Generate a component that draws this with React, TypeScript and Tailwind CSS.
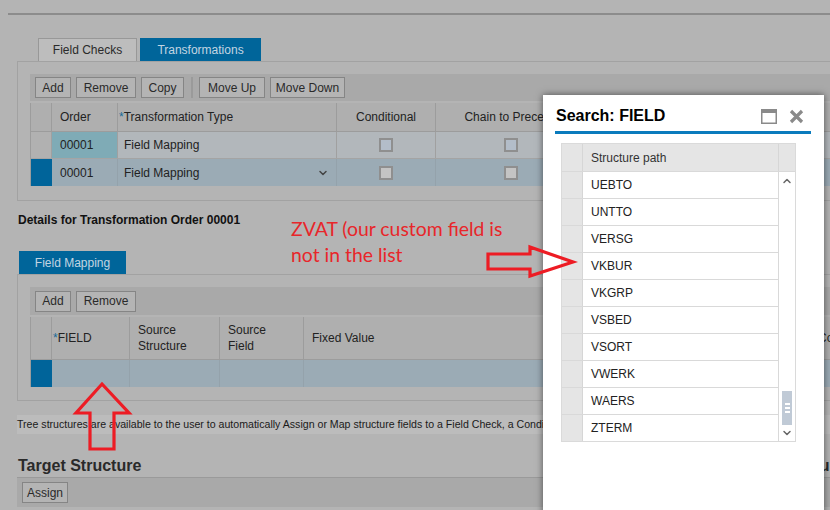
import {ChevronDown, ChevronUp} from "lucide-react";

const font = "font-['Liberation_Sans',Arial,sans-serif]";

function ToolButton({label, w}: {label: string, w: string}) {
    return (
        <button className={`${w} h-[21px] border border-[#858585] bg-[#b4b4b4] text-[12px] text-[#2a2a2a] leading-none`}>
            {label}
        </button>
    )
}

function Check({light}: {light?: boolean}) {
    return <div className={`w-[14px] h-[14px] border-2 border-[#8f8f8f] ${light ? "bg-[#c4c4c4]" : "bg-[#b3bdc9]"}`}/>
}

const fieldRows = ["UEBTO", "UNTTO", "VERSG", "VKBUR", "VKGRP", "VSBED", "VSORT", "VWERK", "WAERS", "ZTERM"]

function SearchDialog() {
    return (
        <div className="absolute left-[543px] top-[95px] w-[281px] h-[430px] bg-white shadow-[0_0_7px_rgba(0,0,0,0.55)] pl-[12px] pr-[13px]">
            <div className="flex items-end justify-between h-[39px] pb-[6px] pl-[1px] pr-[7px] border-b-[3px] border-[#0a7bbd]">
                <h2 className="font-bold text-[16px] leading-[18px] text-black">Search: FIELD</h2>
                <div className="flex items-center gap-[12px] pb-[1px]">
                    <svg width="16" height="15" viewBox="0 0 16 15">
                        <rect x="0.75" y="0.75" width="14.5" height="13.5" fill="none" stroke="#8a8a8a" strokeWidth="1.5"/>
                        <rect x="0" y="0" width="16" height="4" fill="#8a8a8a"/>
                    </svg>
                    <svg width="15" height="15" viewBox="0 0 15 15">
                        <path d="M2 2 L13 13 M13 2 L2 13" stroke="#8a8a8a" strokeWidth="3.2"/>
                    </svg>
                </div>
            </div>
            <div className="mt-[9px] ml-[6px] w-[235px] border border-[#dadada]">
                <div className="grid grid-cols-[21px_196px_1fr] h-[27px] bg-[#e5e5e5]">
                    <div className="border-r border-[#d6d6d6]"/>
                    <div className="flex items-center pl-[8px] text-[12px] text-[#333] border-r border-[#d6d6d6]">Structure path</div>
                    <div/>
                </div>
                <div className="grid grid-cols-[217px_1fr]">
                    <div>
                        {fieldRows.map(r => (
                            <div key={r} className="grid grid-cols-[21px_1fr] h-[27px] border-t border-[#d9d9d9]">
                                <div className="bg-[#e5e5e5] border-r border-[#d6d6d6]"/>
                                <div className="flex items-center pl-[8px] text-[12px] text-[#222] border-r border-[#d9d9d9]">{r}</div>
                            </div>
                        ))}
                    </div>
                    <div className="flex flex-col items-center border-t border-[#d9d9d9] pt-[3px] pb-[2px]">
                        <ChevronUp size={12} strokeWidth={3} className="text-[#666]"/>
                        <div className="flex-1"/>
                        <div className="w-[10px] h-[34px] bg-[#c0cad6] flex flex-col items-center justify-center gap-[2px]">
                            <div className="w-[5px] h-[2px] bg-white"/>
                            <div className="w-[5px] h-[2px] bg-white"/>
                            <div className="w-[5px] h-[2px] bg-white"/>
                        </div>
                        <ChevronDown size={12} strokeWidth={3} className="text-[#666] mt-[2px]"/>
                    </div>
                </div>
            </div>
        </div>
    )
}

function Annotations() {
    return (
        <>
            <p className="absolute left-[291px] top-[216px] font-['Lato',sans-serif] text-[19.4px] leading-[26px] text-[#e8262a]">
                ZVAT (our custom field is<br/>not in the list
            </p>
            <svg className="absolute left-[484px] top-[243px]" width="94" height="36" viewBox="0 0 94 36">
                <path d="M4 11 L46 11 L46 4 L89 19 L46 33 L46 26 L4 26 Z" fill="none" stroke="#ed1c24" strokeWidth="3.2"/>
            </svg>
            <svg className="absolute left-[72px] top-[379px]" width="62" height="74" viewBox="0 0 62 74">
                <path d="M30 5 L57 34 L42 34 L42 70 L18 70 L18 34 L4 34 Z" fill="none" stroke="#ed1c24" strokeWidth="3.2"/>
            </svg>
        </>
    )
}

export default function App() {
    return (
        <div className={`relative w-[830px] h-[510px] overflow-hidden bg-[#b4b4b4] text-[#222] ${font}`}>
            <div className="pt-[13px] pl-[8px]">
                <div className="h-[2px] bg-[#8c8c8c]"/>
            </div>

            <div className="flex ml-[38px] mt-[23px] gap-[3px] text-[12px]">
                <div className="w-[99px] h-[23px] flex items-center justify-center border border-b-0 border-[#989898] bg-[#bdbdbd] text-[#2a2a2a]">
                    Field Checks
                </div>
                <div className="w-[121px] h-[23px] flex items-center justify-center bg-[#00659a] text-[#c3d5e2]">
                    Transformations
                </div>
            </div>

            <div className="ml-[17px] border-l border-t border-b border-[#a2a2a2] pl-[12px] pt-[12px] pb-[14px]">
                <div className="bg-[#a9a9a9] h-[27px] flex items-center gap-[5px] pl-[5px]">
                    <ToolButton label="Add" w="w-[36px]"/>
                    <ToolButton label="Remove" w="w-[60px]"/>
                    <ToolButton label="Copy" w="w-[43px]"/>
                    <div className="w-[2px] h-[21px] bg-[#9a9a9a] ml-[2px] mr-[1px]"/>
                    <ToolButton label="Move Up" w="w-[66px]"/>
                    <ToolButton label="Move Down" w="w-[75px]"/>
                </div>
                <div className="mt-[2px] border-l border-[#9c9c9c] text-[12px]">
                    <div className="grid grid-cols-[21px_66px_219px_99px_160px_1fr] h-[29px] bg-[#afafaf] border-b border-[#9c9c9c]">
                        <div className="border-r border-[#9c9c9c]"/>
                        <div className="flex items-center pl-[8px] border-r border-[#9c9c9c]">Order</div>
                        <div className="flex items-center pl-[1px] border-r border-[#9c9c9c]"><span className="text-[#1a6a96]">*</span>Transformation Type</div>
                        <div className="flex items-center justify-center border-r border-[#9c9c9c]">Conditional</div>
                        <div className="flex items-center justify-center whitespace-nowrap overflow-hidden border-r border-[#9c9c9c]">Chain to Preceding</div>
                        <div/>
                    </div>
                    <div className="grid grid-cols-[21px_66px_219px_99px_160px_1fr] h-[27px] bg-[#b2b7bb] border-b border-[#a4a4a4]">
                        <div className="bg-[#b1b1b1] border-r border-[#a0a0a0]"/>
                        <div className="flex items-center pl-[8px] bg-[#7fabb6] border-r border-[#a0a0a0]">00001</div>
                        <div className="flex items-center pl-[6px] border-r border-[#a0a0a0]">Field Mapping</div>
                        <div className="flex items-center justify-center border-r border-[#a0a0a0]"><Check/></div>
                        <div className="flex items-center justify-start pl-[68px] border-r border-[#a0a0a0]"><Check/></div>
                        <div/>
                    </div>
                    <div className="grid grid-cols-[21px_66px_219px_99px_160px_1fr] h-[27px] bg-[#9babb5]">
                        <div className="bg-[#00649a]"/>
                        <div className="flex items-center pl-[8px] border-r border-[#94a2ab]">00001</div>
                        <div className="flex items-center justify-between pl-[6px] pr-[7px] border-r border-[#94a2ab]">
                            Field Mapping
                            <ChevronDown size={12} strokeWidth={3} className="text-[#444]"/>
                        </div>
                        <div className="flex items-center justify-center border-r border-[#94a2ab]"><Check light/></div>
                        <div className="flex items-center justify-start pl-[68px] border-r border-[#94a2ab]"><Check light/></div>
                        <div/>
                    </div>
                </div>
            </div>

            <p className="ml-[18px] mt-[10px] font-bold text-[12px] text-[#111]">Details for Transformation Order 00001</p>

            <div className="ml-[19px] mt-[22px] w-[107px] h-[23px] flex items-center justify-center bg-[#00659a] text-[#c3d5e2] text-[12px]">
                Field Mapping
            </div>
            <div className="ml-[17px] border-l border-t border-b border-[#a2a2a2] pl-[12px] pt-[12px] pb-[13px]">
                <div className="bg-[#a9a9a9] h-[28px] flex items-center gap-[5px] pl-[5px]">
                    <ToolButton label="Add" w="w-[36px]"/>
                    <ToolButton label="Remove" w="w-[60px]"/>
                </div>
                <div className="mt-[2px] border-l border-[#9c9c9c] text-[12px]">
                    <div className="grid grid-cols-[21px_78px_90px_84px_512px_1fr] h-[43px] bg-[#afafaf] border-b border-[#9c9c9c]">
                        <div className="border-r border-[#9c9c9c]"/>
                        <div className="flex items-center pl-[1px] border-r border-[#9c9c9c]"><span className="text-[#1a6a96]">*</span>FIELD</div>
                        <div className="flex items-center pl-[8px] leading-[16px] border-r border-[#9c9c9c]">Source<br/>Structure</div>
                        <div className="flex items-center pl-[8px] leading-[16px] border-r border-[#9c9c9c]">Source<br/>Field</div>
                        <div className="flex items-center pl-[8px] border-r border-[#9c9c9c]">Fixed Value</div>
                        <div className="flex items-center pl-[2px] whitespace-nowrap">Conversion</div>
                    </div>
                    <div className="grid grid-cols-[21px_78px_90px_84px_512px_1fr] h-[27px] bg-[#9babb5]">
                        <div className="bg-[#00649a]"/>
                        <div className="border-r border-[#94a2ab]"/>
                        <div className="border-r border-[#94a2ab]"/>
                        <div className="border-r border-[#94a2ab]"/>
                        <div className="border-r border-[#94a2ab]"/>
                        <div/>
                    </div>
                </div>
            </div>

            <div className="ml-[17px] mt-[14px] h-[19px] flex items-center bg-[#bcbcbc] text-[10.6px] text-[#1a1a1a] whitespace-nowrap">
                Tree structures are available to the user to automatically Assign or Map structure fields to a Field Check, a Condition or a Transformation within the structure tree.
            </div>

            <div className="flex mt-[22px] ml-[18px] font-bold text-[16px] leading-[20px] text-[#2a2a2a] whitespace-nowrap">
                <span className="shrink-0">Target Structure</span>
                <span className="shrink-0 ml-[658px]">Source Structure</span>
            </div>
            <div className="ml-[17px] mt-[1px] h-[30px] bg-[#a9a9a9] border-t border-[#9a9a9a] flex items-center pl-[5px]">
                <ToolButton label="Assign" w="w-[46px]"/>
            </div>

            <SearchDialog/>
            <Annotations/>
        </div>
    )
}
